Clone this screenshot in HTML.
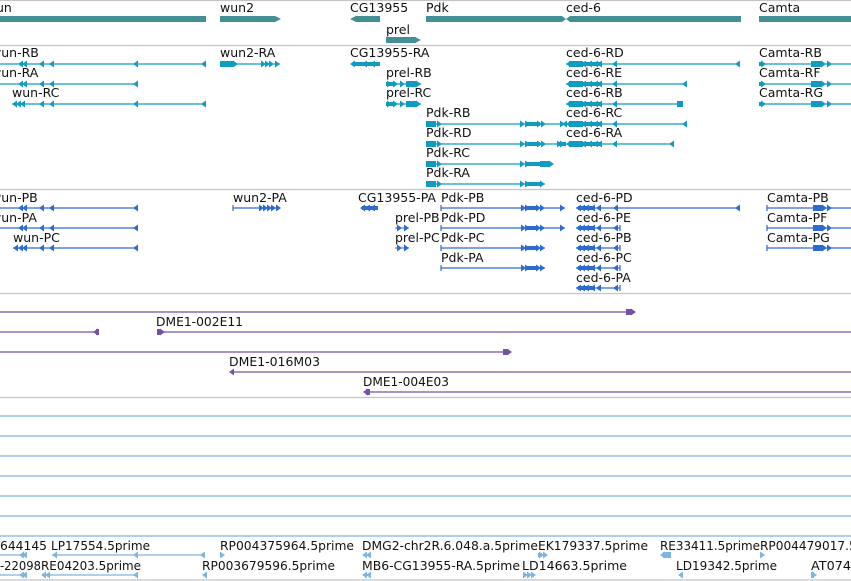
<!DOCTYPE html>
<html><head><meta charset="utf-8"><style>
html,body{margin:0;padding:0;background:#fff;}
svg{display:block;}
text{font-family:"DejaVu Sans","Liberation Sans",sans-serif;font-size:12.5px;fill:#111;}
</style></head><body>
<svg width="851" height="581" viewBox="0 0 851 581" xmlns="http://www.w3.org/2000/svg">
<defs>
<path id="L" d="M0,0 L5,-3.5 L5,3.5Z"/>
<path id="R" d="M0,0 L-5,-3.5 L-5,3.5Z"/>
</defs>
<g stroke="#c4c4c4" stroke-width="1.2">
<line x1="0" y1="0.5" x2="851" y2="0.5"/>
<line x1="0" y1="45.5" x2="851" y2="45.5"/>
<line x1="0" y1="189.5" x2="851" y2="189.5"/>
<line x1="0" y1="293.5" x2="851" y2="293.5"/>
<line x1="0" y1="397.5" x2="851" y2="397.5"/>
<line x1="0" y1="580" x2="851" y2="580"/>
</g>

<g fill="#428f94">
<rect x="0" y="16" width="206" height="6"/>
<polygon points="220,16 275,16 281,19 275,22 220,22"/>
<polygon points="350,19 356,16 380,16 380,22 356,22"/>
<rect x="386" y="37" width="30" height="6"/><polygon points="415,37 421,40 415,43"/>
<polygon points="426,16 562,16 566,19 570,16 741,16 741,22 570,22 566,19 562,22 426,22"/>
<rect x="759" y="16" width="92" height="6"/>
</g>
<g>
<text x="-4" y="12">un</text>
<text x="220" y="12">wun2</text>
<text x="350" y="12">CG13955</text>
<text x="386" y="34">prel</text>
<text x="426" y="12">Pdk</text>
<text x="566" y="12">ced-6</text>
<text x="759" y="12">Camta</text>
</g>

<g>
<text x="-9" y="57">wun-RB</text><text x="-9" y="77">wun-RA</text><text x="12" y="97">wun-RC</text>
<text x="220" y="57">wun2-RA</text><text x="350" y="57">CG13955-RA</text>
<text x="386" y="77">prel-RB</text><text x="386" y="97">prel-RC</text>
<text x="566" y="57">ced-6-RD</text><text x="566" y="77">ced-6-RE</text><text x="566" y="97">ced-6-RB</text><text x="566" y="117">ced-6-RC</text><text x="566" y="137">ced-6-RA</text>
<text x="426" y="117">Pdk-RB</text><text x="426" y="137">Pdk-RD</text><text x="426" y="157">Pdk-RC</text><text x="426" y="177">Pdk-RA</text>
<text x="759" y="57">Camta-RB</text><text x="759" y="77">Camta-RF</text><text x="759" y="97">Camta-RG</text>
</g>
<g stroke="#0f9cc0" stroke-width="1.3">
<line x1="0" y1="64" x2="206" y2="64"/><line x1="0" y1="84" x2="138" y2="84"/><line x1="12" y1="104" x2="206" y2="104"/>
<line x1="220" y1="64" x2="280" y2="64"/>
<line x1="566" y1="64" x2="740" y2="64"/><line x1="566" y1="84" x2="687" y2="84"/><line x1="566" y1="104" x2="683" y2="104"/>
<line x1="426" y1="124" x2="687" y2="124"/><line x1="426" y1="144" x2="674" y2="144"/>
<line x1="426" y1="164" x2="553" y2="164"/><line x1="426" y1="184" x2="545" y2="184"/>
<line x1="759" y1="64" x2="851" y2="64"/><line x1="759" y1="84" x2="851" y2="84"/><line x1="759" y1="104" x2="851" y2="104"/>
<line x1="386" y1="84" x2="421" y2="84"/><line x1="386" y1="104" x2="421" y2="104"/>
</g>
<g fill="#0f9cc0">
<use href="#L" x="18" y="64"/><use href="#L" x="22" y="64"/><use href="#L" x="39" y="64"/><use href="#L" x="49" y="64"/><use href="#L" x="133" y="64"/><use href="#L" x="201" y="64"/>
<use href="#L" x="18" y="84"/><use href="#L" x="22" y="84"/><use href="#L" x="39" y="84"/><use href="#L" x="49" y="84"/><use href="#L" x="133" y="84"/>
<use href="#L" x="12" y="104"/><use href="#L" x="16" y="104"/><use href="#L" x="20" y="104"/><use href="#L" x="39" y="104"/><use href="#L" x="49" y="104"/><use href="#L" x="133" y="104"/><use href="#L" x="201" y="104"/>
<rect x="220" y="61" width="13" height="6"/><use href="#R" x="238" y="64"/>
<use href="#R" x="266" y="64"/><use href="#R" x="270" y="64"/><use href="#R" x="274" y="64"/><use href="#R" x="280" y="64"/>
<use href="#L" x="350" y="64"/><rect x="354" y="62" width="26" height="4"/><use href="#L" x="362" y="64"/><use href="#L" x="370" y="64"/>
<use href="#R" x="392" y="84"/><use href="#R" x="398" y="84"/><use href="#R" x="405" y="84"/><rect x="386" y="82" width="8" height="4"/><rect x="406" y="81" width="10" height="6"/><use href="#R" x="421" y="84"/>
<use href="#R" x="392" y="104"/><use href="#R" x="398" y="104"/><use href="#R" x="405" y="104"/><rect x="386" y="102" width="8" height="4"/><rect x="406" y="101" width="10" height="6"/><use href="#R" x="421" y="104"/>
<g id="ced">
<use href="#L" x="566" y="64"/><rect x="569" y="61" width="14" height="6"/><use href="#L" x="581" y="64"/><use href="#L" x="587" y="64"/><use href="#L" x="593" y="64"/><rect x="583" y="62" width="18" height="4"/><use href="#L" x="597" y="64"/><use href="#L" x="612" y="64"/>
</g>
<use href="#L" x="735" y="64"/>
<use href="#ced" y="20"/><use href="#L" x="682" y="84"/>
<use href="#ced" y="40"/><rect x="677" y="101" width="6" height="6"/><use href="#L" x="676" y="104"/>
<use href="#ced" y="60"/><use href="#L" x="682" y="124"/><use href="#L" x="562" y="124"/>
<use href="#ced" y="80"/><use href="#L" x="669" y="144"/><use href="#R" x="562" y="144"/><rect x="558" y="142" width="8" height="4"/>
<rect x="426" y="121" width="10" height="6"/><use href="#R" x="442" y="124"/><use href="#R" x="525" y="124"/><use href="#R" x="530" y="124"/><rect x="526" y="122" width="14" height="4"/><use href="#R" x="542" y="124"/><use href="#R" x="546" y="124"/><use href="#R" x="565" y="124"/>
<rect x="426" y="141" width="10" height="6"/><use href="#R" x="442" y="144"/><use href="#R" x="525" y="144"/><use href="#R" x="530" y="144"/><rect x="526" y="142" width="14" height="4"/><use href="#R" x="542" y="144"/><use href="#R" x="546" y="144"/><use href="#R" x="565" y="144"/>
<rect x="426" y="161" width="10" height="6"/><use href="#R" x="442" y="164"/><use href="#R" x="525" y="164"/><use href="#R" x="530" y="164"/><rect x="526" y="162" width="14" height="4"/><rect x="540" y="161" width="10" height="6"/><use href="#R" x="554" y="164"/>
<rect x="426" y="181" width="10" height="6"/><use href="#R" x="442" y="184"/><use href="#R" x="525" y="184"/><use href="#R" x="530" y="184"/><rect x="526" y="182" width="14" height="4"/><use href="#R" x="545" y="184"/>
<g id="cam"><use href="#R" x="766" y="64"/><rect x="759" y="62" width="4" height="4"/><rect x="811" y="61" width="10" height="6"/><use href="#R" x="826" y="64"/><use href="#R" x="832" y="64"/></g>
<use href="#cam" y="20"/><use href="#cam" y="40"/>
</g>

<g>
<text x="-9" y="202">wun-PB</text><text x="-9" y="222">wun-PA</text><text x="13" y="242">wun-PC</text>
<text x="233" y="202">wun2-PA</text><text x="358" y="202">CG13955-PA</text>
<text x="395" y="222">prel-PB</text><text x="395" y="242">prel-PC</text>
<text x="441" y="202">Pdk-PB</text><text x="441" y="222">Pdk-PD</text><text x="441" y="242">Pdk-PC</text><text x="441" y="262">Pdk-PA</text>
<text x="576" y="202">ced-6-PD</text><text x="576" y="222">ced-6-PE</text><text x="576" y="242">ced-6-PB</text><text x="576" y="262">ced-6-PC</text><text x="576" y="282">ced-6-PA</text>
<text x="767" y="202">Camta-PB</text><text x="767" y="222">Camta-PF</text><text x="767" y="242">Camta-PG</text>
</g>
<g stroke="#2e6bd0" stroke-width="1.2">
<line x1="0" y1="208" x2="137" y2="208"/><line x1="0" y1="228" x2="137" y2="228"/><line x1="13" y1="248" x2="137" y2="248"/>
<line x1="233" y1="208" x2="280" y2="208"/>
<line x1="441" y1="208" x2="565" y2="208"/><line x1="441" y1="228" x2="565" y2="228"/><line x1="441" y1="248" x2="545" y2="248"/><line x1="441" y1="268" x2="545" y2="268"/>
<line x1="576" y1="208" x2="740" y2="208"/><line x1="576" y1="228" x2="620" y2="228"/><line x1="576" y1="248" x2="620" y2="248"/><line x1="576" y1="268" x2="620" y2="268"/><line x1="576" y1="288" x2="620" y2="288"/>
<line x1="767" y1="208" x2="851" y2="208"/><line x1="767" y1="228" x2="851" y2="228"/><line x1="767" y1="248" x2="851" y2="248"/>
<line x1="441" y1="205" x2="441" y2="211"/><line x1="441" y1="225" x2="441" y2="231"/><line x1="441" y1="245" x2="441" y2="251"/><line x1="441" y1="265" x2="441" y2="271"/>
<line x1="767" y1="205" x2="767" y2="211"/><line x1="767" y1="225" x2="767" y2="231"/><line x1="767" y1="245" x2="767" y2="251"/>
<line x1="620" y1="225" x2="620" y2="231"/><line x1="620" y1="245" x2="620" y2="251"/><line x1="620" y1="265" x2="620" y2="271"/><line x1="620" y1="285" x2="620" y2="291"/>
<line x1="233" y1="205" x2="233" y2="211"/>
</g>
<g fill="#2e6bd0">
<g id="wp"><use href="#L" x="18" y="208"/><use href="#L" x="22" y="208"/><use href="#L" x="39" y="208"/><use href="#L" x="49" y="208"/><use href="#L" x="133" y="208"/></g>
<use href="#wp" y="20"/><use href="#wp" y="40"/><use href="#L" x="13" y="248"/>
<use href="#R" x="264" y="208"/><use href="#R" x="268" y="208"/><use href="#R" x="272" y="208"/><use href="#R" x="276" y="208"/><use href="#R" x="281" y="208"/>
<use href="#L" x="360" y="208"/><use href="#L" x="365" y="208"/><use href="#L" x="370" y="208"/><rect x="362" y="206" width="16" height="4"/>
<use href="#R" x="402" y="228"/><use href="#R" x="409" y="228"/><line x1="395" y1="228" x2="409" y2="228" stroke="#2e6bd0"/>
<use href="#R" x="402" y="248"/><use href="#R" x="409" y="248"/><line x1="395" y1="248" x2="409" y2="248" stroke="#2e6bd0"/>
<g id="pp"><use href="#R" x="526" y="208"/><use href="#R" x="530" y="208"/><rect x="527" y="206" width="10" height="4"/><use href="#R" x="541" y="208"/><use href="#R" x="545" y="208"/></g>
<use href="#R" x="565" y="208"/><use href="#pp" y="20"/><use href="#R" x="565" y="228"/><use href="#pp" y="40"/><use href="#pp" y="60"/>
<g id="cp"><use href="#L" x="576" y="208"/><use href="#L" x="580" y="208"/><use href="#L" x="584" y="208"/><rect x="578" y="206" width="16" height="4"/><use href="#L" x="590" y="208"/><use href="#L" x="596" y="208"/><use href="#L" x="613" y="208"/></g>
<use href="#L" x="735" y="208"/><use href="#cp" y="20"/><use href="#cp" y="40"/><use href="#cp" y="60"/><use href="#cp" y="80"/>
<g id="ctp"><rect x="813" y="205" width="10" height="6"/><use href="#R" x="827" y="208"/><use href="#R" x="832" y="208"/></g>
<use href="#ctp" y="20"/><use href="#ctp" y="40"/>
</g>

<g stroke="#7751a8" stroke-width="1.3">
<line x1="0" y1="312" x2="632" y2="312"/><line x1="0" y1="332" x2="96" y2="332"/><line x1="158" y1="332" x2="851" y2="332"/>
<line x1="0" y1="352" x2="508" y2="352"/><line x1="231" y1="372" x2="851" y2="372"/><line x1="366" y1="392" x2="851" y2="392"/>
</g>
<g fill="#7751a8">
<rect x="626" y="309" width="6" height="6"/><use href="#R" x="636" y="312"/>
<use href="#L" x="93" y="332"/><rect x="96" y="329" width="3" height="6"/>
<rect x="157" y="329" width="3" height="6"/><use href="#R" x="165" y="332"/>
<rect x="503" y="349" width="4" height="6"/><use href="#R" x="512" y="352"/>
<use href="#L" x="229" y="372"/>
<use href="#L" x="363" y="392"/><rect x="366" y="389" width="4" height="6"/>
</g>
<g>
<text x="156" y="326" textLength="87" lengthAdjust="spacingAndGlyphs">DME1-002E11</text>
<text x="229" y="366" textLength="91" lengthAdjust="spacingAndGlyphs">DME1-016M03</text>
<text x="363" y="386" textLength="86" lengthAdjust="spacingAndGlyphs">DME1-004E03</text>
</g>

<g stroke="#7db5e1" stroke-width="1.2">
<line x1="0" y1="416" x2="851" y2="416"/><line x1="0" y1="436" x2="851" y2="436"/><line x1="0" y1="456" x2="851" y2="456"/>
<line x1="0" y1="476" x2="851" y2="476"/><line x1="0" y1="496" x2="851" y2="496"/><line x1="0" y1="516" x2="851" y2="516"/>
<line x1="0" y1="536" x2="851" y2="536"/>
<line x1="0" y1="555" x2="25" y2="555"/><line x1="52" y1="555" x2="205" y2="555"/>
<line x1="0" y1="575" x2="25" y2="575"/><line x1="44" y1="575" x2="136" y2="575"/>
</g>
<g fill="#7db5e1">
<use href="#L" x="19" y="555"/><use href="#L" x="22" y="555"/>
<use href="#L" x="52" y="555"/><use href="#L" x="133" y="555"/><use href="#L" x="200" y="555"/>
<use href="#R" x="225" y="555"/>
<use href="#L" x="362" y="555"/><use href="#L" x="366" y="555"/>
<use href="#R" x="544" y="555"/><use href="#R" x="548" y="555"/><rect x="538" y="553" width="4" height="4"/>
<use href="#L" x="660" y="555"/><rect x="663" y="552" width="8" height="6"/>
<use href="#R" x="765" y="555"/>
<use href="#L" x="19" y="575"/><use href="#L" x="22" y="575"/>
<use href="#L" x="41" y="575"/><use href="#L" x="45" y="575"/><use href="#L" x="133" y="575"/>
<use href="#L" x="202" y="575"/>
<use href="#L" x="362" y="575"/><use href="#L" x="366" y="575"/>
<use href="#R" x="528" y="575"/><use href="#R" x="532" y="575"/><use href="#R" x="536" y="575"/>
<use href="#L" x="678" y="575"/>
<use href="#R" x="817" y="575"/><rect x="811" y="572" width="3" height="6"/>
</g>
<g>
<text x="0" y="550" textLength="47" lengthAdjust="spacingAndGlyphs">644145</text>
<text x="51" y="550" textLength="99" lengthAdjust="spacingAndGlyphs">LP17554.5prime</text>
<text x="220" y="550" textLength="134" lengthAdjust="spacingAndGlyphs">RP004375964.5prime</text>
<text x="362" y="550" textLength="176" lengthAdjust="spacingAndGlyphs">DMG2-chr2R.6.048.a.5prime</text>
<text x="538" y="550" textLength="110" lengthAdjust="spacingAndGlyphs">EK179337.5prime</text>
<text x="660" y="550" textLength="100" lengthAdjust="spacingAndGlyphs">RE33411.5prime</text>
<text x="760" y="550" textLength="132" lengthAdjust="spacingAndGlyphs">RP004479017.5prime</text>
<text x="0" y="570" textLength="41" lengthAdjust="spacingAndGlyphs">-22098</text>
<text x="41" y="570" textLength="100" lengthAdjust="spacingAndGlyphs">RE04203.5prime</text>
<text x="202" y="570" textLength="133" lengthAdjust="spacingAndGlyphs">RP003679596.5prime</text>
<text x="362" y="570" textLength="158" lengthAdjust="spacingAndGlyphs">MB6-CG13955-RA.5prime</text>
<text x="522" y="570" textLength="105" lengthAdjust="spacingAndGlyphs">LD14663.5prime</text>
<text x="676" y="570" textLength="101" lengthAdjust="spacingAndGlyphs">LD19342.5prime</text>
<text x="811" y="570" textLength="40" lengthAdjust="spacingAndGlyphs">AT074</text>
</g>
</svg>
</body></html>
